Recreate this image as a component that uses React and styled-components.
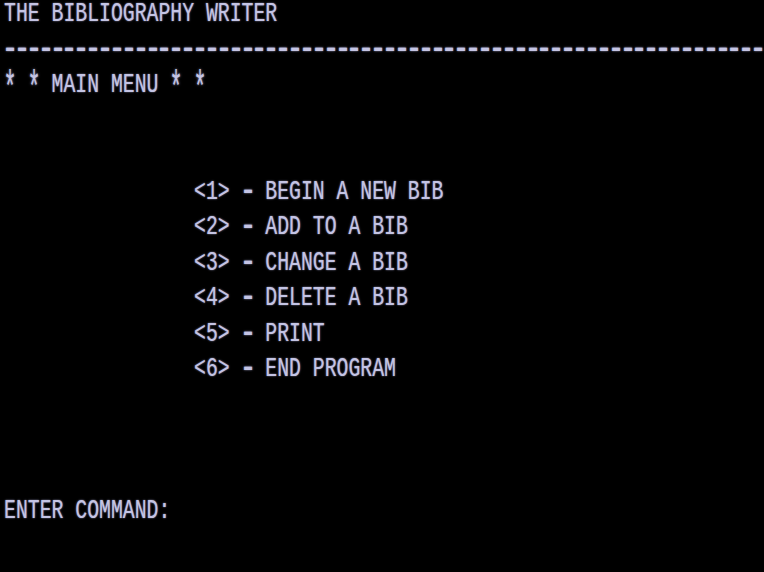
import React from 'react';
import styled, { createGlobalStyle } from 'styled-components';

const COL = 11.875;
const ROW = 35.5;

const Global = createGlobalStyle`
  html, body {
    margin: 0;
    padding: 0;
    background: #000;
  }
  #root {
    width: 764px;
    height: 572px;
    overflow: hidden;
    background: #000;
  }
`;

const Screen = styled.div`
  display: flex;
  flex-direction: column;
  width: 764px;
  height: 572px;
  padding: 0 0 0 4px;
  box-sizing: border-box;
  overflow: hidden;
  background: #000;
`;

const Line = styled.div`
  display: flex;
  align-items: flex-start;
  height: ${ROW}px;
  flex-shrink: 0;
  padding-left: ${p => (p.$indent || 0) * COL}px;
  box-sizing: border-box;
`;

const Text = styled.span`
  display: inline-block;
  font-family: "Liberation Mono", "DejaVu Sans Mono", monospace;
  font-size: ${COL / 0.6}px;
  line-height: 24px;
  height: 24px;
  white-space: pre;
  color: #c4c4e4;
  text-shadow: 0 0 1.5px rgba(190, 190, 235, 0.8);
  transform: scaleY(1.38);
  transform-origin: 50% 50%;
  padding-top: 1.5px;
`;

// TRS-80 style glyphs: wide dashes and tall asterisks
const Dash = styled.span`
  display: inline-block;
  width: ${COL}px;
  text-align: center;
  font-weight: bold;
  transform: scaleX(1.4);
`;

const Star = styled.span`
  display: inline-block;
  width: ${COL}px;
  text-align: center;
  transform: translateY(4px) scale(1.1, 1.7);
`;

const glyphs = text =>
  text.split('').map((ch, i) => {
    if (ch === '-') return <Dash key={i}>-</Dash>;
    if (ch === '*') return <Star key={i}>*</Star>;
    return ch;
  });

const menu = [
  '<1> - BEGIN A NEW BIB',
  '<2> - ADD TO A BIB',
  '<3> - CHANGE A BIB',
  '<4> - DELETE A BIB',
  '<5> - PRINT',
  '<6> - END PROGRAM',
];

const lines = [
  { text: 'THE BIBLIOGRAPHY WRITER' },
  { text: '-'.repeat(64) },
  { text: '* * MAIN MENU * *' },
  { text: '' },
  { text: '' },
  ...menu.map(t => ({ text: t, indent: 16 })),
  { text: '' },
  { text: '' },
  { text: '' },
  { text: 'ENTER COMMAND:' },
  { text: '' },
];

export default function App() {
  return (
    <>
      <Global />
      <Screen>
        {lines.map((l, i) => (
          <Line key={i} $indent={l.indent}>
            <Text>{glyphs(l.text)}</Text>
          </Line>
        ))}
      </Screen>
    </>
  );
}
